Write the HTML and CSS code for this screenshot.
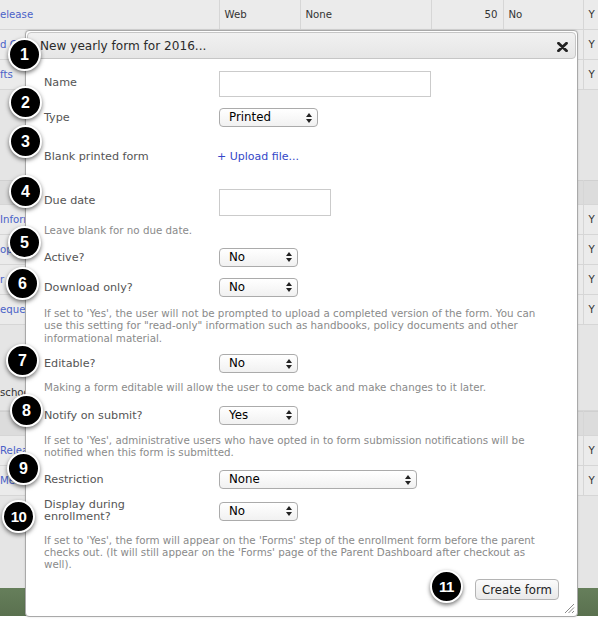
FILE: index.html
```html
<!DOCTYPE html>
<html>
<head>
<meta charset="utf-8">
<link rel="stylesheet" href="styles.css">
</head>
<body>
<div class="page">
  <div class="bg">
    <table class="grid t1">
      <colgroup><col class="c1"><col class="c2"><col class="c3"><col class="c4"><col class="c5"><col class="c6"></colgroup>
      <tr class="r first"><td class="lnk">elease</td><td>Web</td><td>None</td><td class="num">50</td><td>No</td><td>Y</td></tr>
      <tr class="r"><td class="lnk">d Care</td><td></td><td></td><td></td><td></td><td>Y</td></tr>
      <tr class="r"><td class="lnk">fts</td><td></td><td></td><td></td><td></td><td>Y</td></tr>
    </table>
    <div class="gap g1"></div>
    <table class="grid t2">
      <colgroup><col class="c1"><col class="c2"><col class="c3"><col class="c4"><col class="c5"><col class="c6"></colgroup>
      <tr class="hd"><td></td><td></td><td></td><td></td><td></td><td></td></tr>
      <tr class="r"><td class="lnk">Information</td><td></td><td></td><td></td><td></td><td>Y</td></tr>
      <tr class="r"><td class="lnk">optional</td><td></td><td></td><td></td><td></td><td>Y</td></tr>
      <tr class="r"><td class="lnk">r Camp</td><td></td><td></td><td></td><td></td><td>Y</td></tr>
      <tr class="r"><td class="lnk">equest</td><td></td><td></td><td></td><td></td><td>Y</td></tr>
    </table>
    <div class="gap g2"></div>
    <div class="lone">school</div>
    <table class="grid t3">
      <colgroup><col class="c1"><col class="c2"><col class="c3"><col class="c4"><col class="c5"><col class="c6"></colgroup>
      <tr class="hd"><td></td><td></td><td></td><td></td><td></td><td></td></tr>
      <tr class="r"><td class="lnk">Release</td><td></td><td></td><td></td><td></td><td>Y</td></tr>
      <tr class="r"><td class="lnk">Med</td><td></td><td></td><td></td><td></td><td>Y</td></tr>
    </table>
    <div class="gap g3"></div>
    <div class="green"></div>
  </div>

  <div class="modal">
    <div class="titlebar">
      <span class="title">New yearly form for 2016...</span>
      <svg class="close" width="11" height="10" viewBox="0 0 11 10"><path d="M1.5 1.2 L9.5 8.8 M9.5 1.2 L1.5 8.8" stroke="#222" stroke-width="2.8" stroke-linecap="round"/></svg>
    </div>
    <div class="body">
      <div class="row row-name">
        <label class="lbl top">Name</label>
        <div class="input w-name"></div>
      </div>
      <div class="row row-type">
        <label class="lbl">Type</label>
        <div class="select w-type"><span>Printed</span><svg class="arr" width="6" height="10" viewBox="0 0 6 10"><path d="M3 0 L6 4 L0 4 Z M0 6 L6 6 L3 10 Z" fill="#222"/></svg></div>
      </div>
      <div class="row row-blank">
        <label class="lbl">Blank printed form</label>
        <a class="upload">+ Upload file...</a>
      </div>
      <div class="row row-due">
        <label class="lbl top">Due date</label>
        <div class="input w-due"></div>
      </div>
      <p class="desc d-due">Leave blank for no due date.</p>
      <div class="row row-active">
        <label class="lbl">Active?</label>
        <div class="select w-no"><span>No</span><svg class="arr" width="6" height="10" viewBox="0 0 6 10"><path d="M3 0 L6 4 L0 4 Z M0 6 L6 6 L3 10 Z" fill="#222"/></svg></div>
      </div>
      <div class="row row-dl">
        <label class="lbl">Download only?</label>
        <div class="select w-no"><span>No</span><svg class="arr" width="6" height="10" viewBox="0 0 6 10"><path d="M3 0 L6 4 L0 4 Z M0 6 L6 6 L3 10 Z" fill="#222"/></svg></div>
      </div>
      <p class="desc d-dl">If set to 'Yes', the user will not be prompted to upload a completed version of the form. You can<br>use this setting for "read-only" information such as handbooks, policy documents and other<br>informational material.</p>
      <div class="row row-edit">
        <label class="lbl">Editable?</label>
        <div class="select w-no"><span>No</span><svg class="arr" width="6" height="10" viewBox="0 0 6 10"><path d="M3 0 L6 4 L0 4 Z M0 6 L6 6 L3 10 Z" fill="#222"/></svg></div>
      </div>
      <p class="desc d-edit">Making a form editable will allow the user to come back and make changes to it later.</p>
      <div class="row row-notify">
        <label class="lbl">Notify on submit?</label>
        <div class="select w-no"><span>Yes</span><svg class="arr" width="6" height="10" viewBox="0 0 6 10"><path d="M3 0 L6 4 L0 4 Z M0 6 L6 6 L3 10 Z" fill="#222"/></svg></div>
      </div>
      <p class="desc d-notify">If set to 'Yes', administrative users who have opted in to form submission notifications will be<br>notified when this form is submitted.</p>
      <div class="row row-restr">
        <label class="lbl">Restriction</label>
        <div class="select w-restr"><span>None</span><svg class="arr" width="6" height="10" viewBox="0 0 6 10"><path d="M3 0 L6 4 L0 4 Z M0 6 L6 6 L3 10 Z" fill="#222"/></svg></div>
      </div>
      <div class="row row-disp">
        <label class="lbl two">Display during<br>enrollment?</label>
        <div class="select w-no"><span>No</span><svg class="arr" width="6" height="10" viewBox="0 0 6 10"><path d="M3 0 L6 4 L0 4 Z M0 6 L6 6 L3 10 Z" fill="#222"/></svg></div>
      </div>
      <p class="desc d-disp">If set to 'Yes', the form will appear on the 'Forms' step of the enrollment form before the parent<br>checks out. (It will still appear on the 'Forms' page of the Parent Dashboard after checkout as<br>well).</p>
      <div class="actions">
        <button class="btn">Create form</button>
      </div>
    </div>
    <svg class="grip" width="11" height="11" viewBox="0 0 11 11"><path d="M10 1 L1 10 M10 4.5 L4.5 10 M10 8 L8 10" stroke="#8a8a8a" stroke-width="1"/></svg>
  </div>

  <div class="marker m1">1</div>
  <div class="marker m2">2</div>
  <div class="marker m3">3</div>
  <div class="marker m4">4</div>
  <div class="marker m5">5</div>
  <div class="marker m6">6</div>
  <div class="marker m7">7</div>
  <div class="marker m8">8</div>
  <div class="marker m9">9</div>
  <div class="marker m10">10</div>
  <div class="marker m11">11</div>
</div>
</body>
</html>
```

FILE: styles.css
```css
* { box-sizing: border-box; }
html, body { margin: 0; padding: 0; background: #fff; }
body { width: 598px; height: 631px; overflow: hidden; font-family: "DejaVu Sans", sans-serif; }
.page { position: relative; width: 598px; height: 631px; overflow: hidden; }

/* background table */
.bg { width: 598px; background: #e5e5e5; }
.grid { border-collapse: collapse; table-layout: fixed; width: 660px; font-size: 10.2px; color: #333; }
.c1 { width: 219px; } .c2 { width: 81px; } .c3 { width: 131px; } .c4 { width: 72px; } .c5 { width: 80px; } .c6 { width: 77px; }
.grid td { border: 1px solid #d6d6d6; border-top: 0; padding: 0 5px; white-space: nowrap; overflow: hidden; background: #ebebeb; }
.grid td:first-child { padding-left: 0; border-left: 0; }
.grid .r td { height: 30px; }
.grid .r.first td { height: 29px; }
.grid .hd td { height: 24px; background: #dcdcdc; border-top: 1px solid #d0d0d0; }
.grid td.lnk { color: #4a62c8; }
.grid td.num { text-align: right; }
.gap { background: #e5e5e5; }
.g1 { height: 90px; }
.g2 { height: 54px; }
.lone { height: 32px; line-height: 22px; font-size: 10.2px; color: #333; padding-top: 3px; border-bottom: 1px solid #d6d6d6; }
.g3 { height: 92px; }
.green { height: 28px; background: linear-gradient(#667f5b, #5a714f); }

/* modal */
.modal { position: absolute; left: 25px; top: 30px; width: 553px; height: 587px; background: #fff; border: 1px solid #a9a9a9; border-radius: 4px; padding: 1px 1px; box-shadow: 0 0 2px rgba(0,0,0,0.15); }
.titlebar { height: 27px; border: 1px solid #c6c6c6; border-radius: 4px; background: linear-gradient(#f1f1f1, #e6e6e6); display: flex; align-items: center; justify-content: space-between; padding: 1px 7px 0 12px; }
.title { font-size: 12.1px; color: #2a2a2a; }
.close { display: block; margin-top: 1px; }

.body { padding: 0 17px 0 17px; font-size: 11.1px; }
.row { display: flex; align-items: center; }
.lbl { width: 175px; flex: none; color: #555; line-height: 15px; font-size: 11.2px; }
.lbl.top { align-self: flex-start; padding-top: 4px; }
.lbl.two { line-height: 12px; }
.input { height: 26px; border: 1px solid #cbcbcb; background: #fff; }
.w-name { width: 212px; }
.w-due { width: 112px; height: 27px; }
.select { height: 19px; border: 1px solid #ababab; border-radius: 4px; background: linear-gradient(#ffffff, #f1f1f1); display: flex; align-items: center; justify-content: space-between; padding: 0 5px 0 9px; font-size: 11.8px; color: #000; }
.select span { line-height: 17px; }
.arr { display: block; }
.w-type { width: 99px; }
.w-no { width: 79px; }
.w-restr { width: 198px; }
.upload { color: #3447c8; font-size: 11px; margin-left: -2px; line-height: 19px; }

.row-name { margin-top: 12px; height: 26px; }
.row-type { margin-top: 11px; height: 19px; }
.row-blank { margin-top: 20px; height: 19px; }
.row-due { margin-top: 23px; height: 27px; }
.desc { margin: 0; font-size: 10.3px; line-height: 12.5px; color: #8a8a8a; white-space: nowrap; }
.d-due { margin-top: 8px; }
.row-active { margin-top: 11px; height: 19px; }
.row-dl { margin-top: 11px; height: 19px; }
.d-dl { margin-top: 10px; }
.row-edit { margin-top: 10px; height: 19px; }
.d-edit { margin-top: 8px; }
.row-notify { margin-top: 12px; height: 19px; }
.d-notify { margin-top: 9px; }
.row-restr { margin-top: 11.5px; height: 19px; }
.row-disp { margin-top: 10px; height: 24px; }
.d-disp { margin-top: 11px; line-height: 12px; }
.actions { display: flex; justify-content: flex-end; margin-top: 9px; }
.btn { width: 84px; height: 21px; border: 1px solid #b4b4b4; border-radius: 4px; background: linear-gradient(#fbfbfb, #e9e9e9); font-family: "DejaVu Sans", sans-serif; font-size: 11.7px; color: #222; padding: 0; }
.grip { position: absolute; right: 2px; bottom: 2px; }

/* callout markers */
.marker { position: absolute; width: 33px; height: 33px; border-radius: 50%; background: #000; border: 2.5px solid #fff; box-shadow: 0 2px 4px rgba(0,0,0,0.55); color: #fff; font-family: "Liberation Sans", sans-serif; font-weight: bold; font-size: 16px; display: flex; align-items: center; justify-content: center; }
.m1 { left: 8px; top: 38px; }
.m2 { left: 9px; top: 86px; }
.m3 { left: 9px; top: 125px; }
.m4 { left: 9px; top: 175px; }
.m5 { left: 8px; top: 226px; }
.m6 { left: 6px; top: 267px; }
.m7 { left: 6px; top: 344px; }
.m8 { left: 10px; top: 394px; }
.m9 { left: 7px; top: 452px; }
.m10 { left: 2px; top: 500px; font-size: 15px; letter-spacing: -0.5px; }
.m11 { left: 430px; top: 570px; font-size: 15px; letter-spacing: -0.5px; }
```
